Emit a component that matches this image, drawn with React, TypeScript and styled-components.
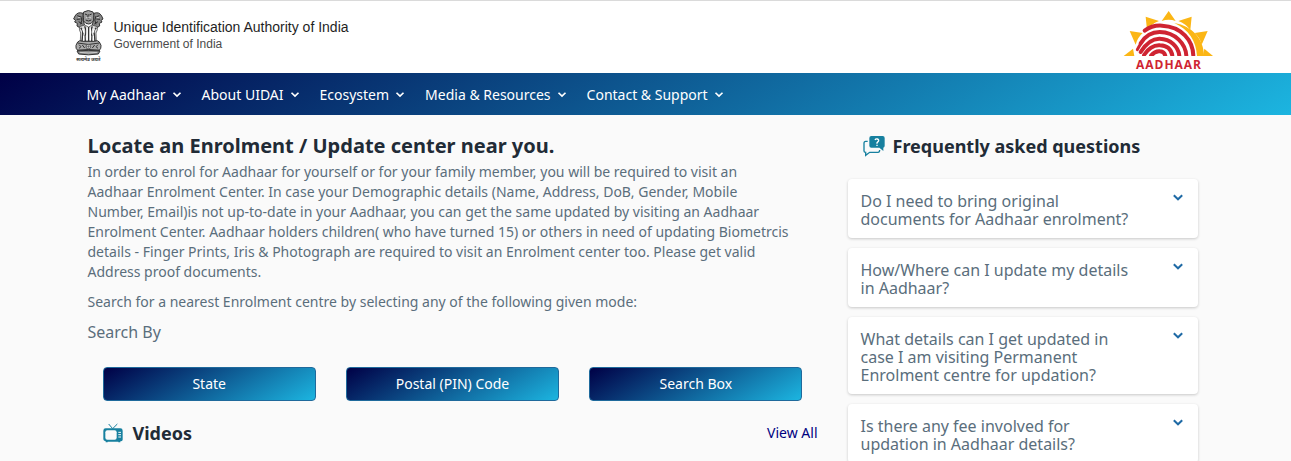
import React from 'react';
import styled, { createGlobalStyle } from 'styled-components';

const GlobalStyle = createGlobalStyle`
  *, *::before, *::after { box-sizing: border-box; }
  body {
    margin: 0;
    background: #fafafa;
    color: #5a6e7c;
    font-family: "Noto Sans", "Open Sans", sans-serif;
    font-size: 14px;
    line-height: 20px;
  }
  h1, h2, p, ul { margin: 0; padding: 0; }
  button { font: inherit; cursor: pointer; }
`;

const brandGradient = 'linear-gradient(150deg, #000046, #1cb5e0)';

const Page = styled.div`
  min-height: 100vh;
  overflow: hidden;
`;

const Band = styled.div`
  padding-right: 6px;
`;

const Container = styled.div`
  width: 100%;
  max-width: 1140px;
  margin: 0 auto;
`;

const Header = styled.header`
  background: #fff;
  border-top: 1px solid #dadada;
`;

const HeaderRow = styled(Container)`
  display: flex;
  justify-content: space-between;
  align-items: flex-start;
  height: 72px;
  padding-top: 9px;
`;

const Identity = styled.div`
  display: flex;
  align-items: flex-start;
  gap: 10px;
`;

const IdentityText = styled.div`
  padding-top: 8px;
  font-family: "Liberation Sans", Arial, sans-serif;
`;

const Authority = styled.p`
  color: #1f1f1f;
  font-size: 14px;
  line-height: 18px;
`;

const Government = styled.p`
  color: #4a4a4a;
  font-size: 12px;
  line-height: 16px;
`;

const NavBar = styled.nav`
  background: ${brandGradient};
`;

const Menu = styled.ul`
  display: flex;
  align-items: center;
  gap: 20px;
  height: 42px;
  padding: 2px 14px 0;
  list-style: none;
`;

const MenuButton = styled.button`
  display: flex;
  align-items: center;
  gap: 6px;
  padding: 0;
  border: 0;
  background: none;
  color: #fff;
  line-height: 20px;
  white-space: nowrap;
`;

const Columns = styled(Container)`
  display: grid;
  grid-template-columns: 2fr 1fr;
`;

const Main = styled.main`
  padding: 19px 15px 0;
`;

const Aside = styled.aside`
  padding: 19px 15px 0;
`;

const Title = styled.h1`
  padding-bottom: 1px;
  color: #212b36;
  font-size: 20px;
  font-weight: 700;
  line-height: 24px;
`;

const Paragraph = styled.p`
  padding: 3px 24px 7px 0;
`;

const SearchLabel = styled.p`
  padding: 1px 0 3px;
  font-size: 16px;
  line-height: 24px;
`;

const ModeRow = styled.div`
  display: grid;
  grid-template-columns: repeat(3, 1fr);
  gap: 30px;
  padding: 20px 15px 0;
`;

const ModeButton = styled.button`
  height: 34px;
  padding: 0 12px;
  border: 1px solid #1f6a9c;
  border-radius: 4px;
  background: ${brandGradient};
  color: #fff;
`;

const VideosRow = styled.div`
  display: flex;
  align-items: center;
  justify-content: space-between;
  padding: 20px 0 20px 15px;
`;

const SectionTitle = styled.h2`
  display: flex;
  align-items: center;
  gap: 10px;
  color: #212b36;
  font-size: 18px;
  font-weight: 700;
  line-height: 24px;
`;

const ViewAll = styled.a`
  color: #000080;
  text-decoration: none;
`;

const FaqHeading = styled(SectionTitle)`
  gap: 8px;
  padding-left: 15px;
`;

const FaqList = styled.div`
  display: grid;
  gap: 10px;
  padding-top: 21px;
`;

const FaqItem = styled.button`
  display: flex;
  justify-content: space-between;
  gap: 32px;
  padding: 13px 14px 10px 13px;
  border: 0;
  border-radius: 4px;
  background: #fff;
  box-shadow: 0 1px 3px rgba(0, 0, 0, 0.2);
  color: #5a6e7c;
  text-align: left;
`;

const Question = styled.span`
  font-size: 16px;
  line-height: 18px;
`;

const ChevronSvg = styled.svg`
  flex: none;
`;

const Chevron = ({ size, color }: { size: number; color: string }) => (
  <ChevronSvg width={size} height={size} viewBox="0 0 12 12" fill="none" stroke={color} strokeWidth="2" aria-hidden="true">
    <path d="M1.8 3.3 L6 7.3 L10.2 3.3" />
  </ChevronSvg>
);

const Emblem = () => (
  <svg width="31" height="52" viewBox="0 0 93 156" fill="none" stroke="#333" role="img" aria-label="State Emblem of India">
    <path d="M32 6 Q46 -3 60 6 L63 16 Q60 22 62 32 Q56 42 47 42 Q36 42 31 32 Q33 22 30 16Z" fill="#9d9d9d" strokeWidth="3" />
    <path d="M30 10 Q14 4 6 18 L2 27 L8 31 L5 36 L13 40 L12 48 L22 54 L35 48 L30 28Z" fill="#888" strokeWidth="3" />
    <path d="M63 10 Q78 4 86 18 L90 27 L84 31 L87 36 L79 40 L80 48 L70 54 L57 48 L62 28Z" fill="#888" strokeWidth="3" />
    <path d="M36 12 L43 15 M56 12 L49 15 M46 13 L44 24 L49 24 M38 30 Q46 36 55 30 M13 17 L21 20 M79 17 L71 20 M11 28 L22 27 M81 28 L70 27 M23 18 Q30 30 23 43 M69 18 Q62 30 69 43 M17 35 L28 42 M75 35 L64 42" stroke="#2c2c2c" strokeWidth="3" />
    <path d="M39 23 H54 M15 23 H22 M71 23 H78 M35 39 L41 44 M58 39 L52 44" stroke="#eee" strokeWidth="2" />
    <path d="M19 50 Q18 60 23 69 L22 93 H70 L69 69 Q75 60 73 50 L57 45 L47 51 L35 45Z" fill="#ddd" strokeWidth="2" />
    <path d="M23 53 Q32 62 29 72 L27 95 M35 49 Q42 65 36 78 L37 97 M47 51 V97 M58 49 Q50 65 57 78 L56 97 M70 53 Q60 62 64 72 L66 95" stroke="#333" strokeWidth="4" />
    <path d="M29 56 L33 68 M42 55 V92 M52 55 V92 M64 56 L60 68 M32 77 V94 M61 77 V94" stroke="#fff" strokeWidth="4" />
    <path d="M14 96 Q20 89 28 94 H65 Q73 89 79 96 L84 106 Q85 116 79 121 H14 Q7 116 9 106Z" fill="#aaa" strokeWidth="3" />
    <path d="M14 99 Q46 108 79 99 M12 121 Q46 116 81 121 M18 104 L24 110 L18 115 M28 105 L35 114 M75 104 L69 110 L75 115 M65 105 L58 114" stroke="#333" strokeWidth="3" />
    <circle cx="46" cy="110" r="7" fill="#ddd" strokeWidth="2" />
    <path d="M40 110 H52 M46 104 V116" strokeWidth="1.5" />
    <path d="M12 123 Q46 119 81 123 L76 132 Q46 137 17 132Z" fill="#888" strokeWidth="3" />
    <path d="M20 127 Q46 131 73 127" stroke="#eee" strokeWidth="2" />
    <text x="46" y="152" textAnchor="middle" fontSize="14" fontWeight="700" fill="#333" stroke="none">सत्यमेव जयते</text>
  </svg>
);

const AadhaarLogo = () => (
  <svg width="90" height="64" viewBox="38 27 270 192" role="img" aria-label="Aadhaar">
    <g fill="#fbb615">
      <path d="M175 30 L196 60 Q175 53 154 60Z" />
      <path d="M106 47 L146 60 Q124 68 110 87Z" />
      <path d="M244 47 L204 60 Q226 68 240 87Z" />
      <path d="M58 90 L97 96 Q81 110 76 131Z" />
      <path d="M292 90 L253 96 Q269 110 274 131Z" />
      <path d="M40 165 L68 143 L72 165Z" />
      <path d="M308 165 L282 143 L278 165Z" />
      <path d="M192 66 C246 75 281 115 281 165 H260 C258 121 235 85 192 66Z" />
    </g>
    <g fill="none" stroke="#cf2432" strokeWidth="12" strokeLinecap="round">
      <path d="M103 89 Q126 72 155 74 C214 77 248 118 249 164" />
      <path d="M81 146 Q85 138 90 130" strokeWidth="9" />
      <path d="M91 127 Q112 93 148 93 C196 94 226 129 228 164" />
      <path d="M91 153 Q117 112 148 113 C181 114 204 137 207 164" />
      <path d="M101 162 Q122 131 149 133 C171 134 183 146 186 164" />
      <path d="M122 164 Q135 149 149 151 Q162 152 165 164" />
    </g>
    <rect x="75" y="165" width="206" height="10" fill="#fff" />
    <text x="176" y="204" textAnchor="middle" fontFamily="Open Sans, sans-serif" fontSize="36" fontWeight="700" letterSpacing="3" fill="#cf2432">AADHAAR</text>
  </svg>
);

const FaqIcon = () => (
  <svg width="22" height="22" viewBox="0 0 66 66" fill="none" aria-hidden="true">
    <path d="M14 19 H8 Q3 19 3 25 V48 Q3 52 8 52 V61 L20 52 H45 Q50 52 50 45" stroke="#17809f" strokeWidth="4" />
    <path d="M25 3 H59 Q65 3 65 9 V32 Q65 37 61 38 V48 L49 38 H25 Q19 38 19 32 V9 Q19 3 25 3Z" fill="#17809f" />
    <path d="M36 15 Q38 11 43 12 Q49 14 46 19 L42 23 V26 M42 29 V33" stroke="#fff" strokeWidth="4" />
  </svg>
);

const TvIcon = () => (
  <svg width="20" height="20" viewBox="0 0 60 60" fill="none" stroke="#17809f" aria-hidden="true">
    <path d="M17 3 L29 17 L43 3" strokeWidth="3" />
    <path d="M8 16 H52 Q59 16 59 23 V50 Q59 55 52 55 V58 H46 V56 H14 V58 H8 V55 Q1 54 1 49 V23 Q1 16 8 16Z" fill="#17809f" stroke="none" />
    <rect x="7" y="22" width="34" height="28" rx="6" fill="#fafafa" stroke="none" />
    <path d="M46 28 H54 M46 35 H54 M46 42 H54" stroke="#fafafa" strokeWidth="3" />
  </svg>
);

const menuItems = ['My Aadhaar', 'About UIDAI', 'Ecosystem', 'Media & Resources', 'Contact & Support'];
const searchModes = ['State', 'Postal (PIN) Code', 'Search Box'];
const questions = [
  'Do I need to bring original documents for Aadhaar enrolment?',
  'How/Where can I update my details in Aadhaar?',
  'What details can I get updated in case I am visiting Permanent Enrolment centre for updation?',
  'Is there any fee involved for updation in Aadhaar details?',
];

export default function App() {
  return (
    <Page>
      <GlobalStyle />
      <Header>
        <Band>
          <HeaderRow>
            <Identity>
              <Emblem />
              <IdentityText>
                <Authority>Unique Identification Authority of India</Authority>
                <Government>Government of India</Government>
              </IdentityText>
            </Identity>
            <AadhaarLogo />
          </HeaderRow>
        </Band>
      </Header>
      <NavBar>
        <Band>
          <Container>
            <Menu>
              {menuItems.map((item) => (
                <li key={item}>
                  <MenuButton type="button">
                    {item}
                    <Chevron size={10} color="#fff" />
                  </MenuButton>
                </li>
              ))}
            </Menu>
          </Container>
        </Band>
      </NavBar>
      <Band>
        <Columns>
          <Main>
            <Title>Locate an Enrolment / Update center near you.</Title>
            <Paragraph>
              In order to enrol for Aadhaar for yourself or for your family member, you will be required to visit an
              Aadhaar Enrolment Center. In case your Demographic details (Name, Address, DoB, Gender, Mobile Number,
              Email)is not up-to-date in your Aadhaar, you can get the same updated by visiting an Aadhaar Enrolment
              Center. Aadhaar holders children( who have turned 15) or others in need of updating Biometrcis details -
              Finger Prints, Iris &amp; Photograph are required to visit an Enrolment center too. Please get valid
              Address proof documents.
            </Paragraph>
            <Paragraph>Search for a nearest Enrolment centre by selecting any of the following given mode:</Paragraph>
            <SearchLabel>Search By</SearchLabel>
            <ModeRow>
              {searchModes.map((mode) => (
                <ModeButton key={mode} type="button">{mode}</ModeButton>
              ))}
            </ModeRow>
            <VideosRow>
              <SectionTitle><TvIcon />Videos</SectionTitle>
              <ViewAll href="#videos">View All</ViewAll>
            </VideosRow>
          </Main>
          <Aside>
            <FaqHeading><FaqIcon />Frequently asked questions</FaqHeading>
            <FaqList>
              {questions.map((question) => (
                <FaqItem key={question} type="button" aria-expanded="false">
                  <Question>{question}</Question>
                  <Chevron size={12} color="#1f6aa5" />
                </FaqItem>
              ))}
            </FaqList>
          </Aside>
        </Columns>
      </Band>
    </Page>
  );
}
